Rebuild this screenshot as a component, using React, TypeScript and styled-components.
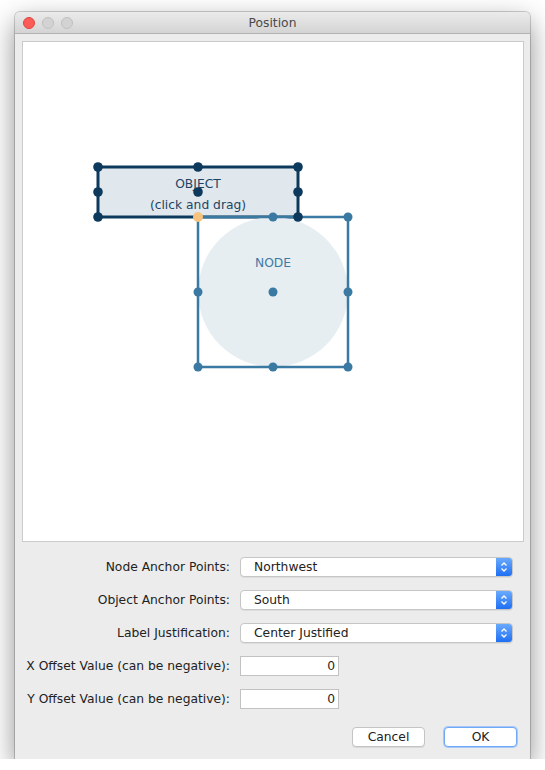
import styled, { createGlobalStyle } from "styled-components";

const GlobalStyle = createGlobalStyle`
  * { box-sizing: border-box; }
  body {
    margin: 0;
    background: #ffffff;
    font-family: "DejaVu Sans", "Liberation Sans", sans-serif;
    font-size: 12.3px;
    color: #222;
  }
`;

const Window = styled.div`
  width: 515px;
  margin: 12px 0 0 15px;
  background: #ececec;
  border-radius: 5px 5px 0 0;
  box-shadow: 0 0 0 1px rgba(0, 0, 0, 0.18), 0 10px 28px rgba(0, 0, 0, 0.45);
`;

const TitleBar = styled.div`
  position: relative;
  height: 22px;
  display: flex;
  align-items: center;
  justify-content: center;
  background: linear-gradient(#ebebeb, #d4d4d4);
  border-bottom: 1px solid #b2b2b2;
  border-radius: 5px 5px 0 0;
  color: #4a4a4a;
`;

const Lights = styled.div`
  position: absolute;
  left: 8px;
  top: 5px;
  display: flex;
  gap: 7px;
`;

const Light = styled.span<{ $red?: boolean }>`
  width: 12px;
  height: 12px;
  border-radius: 50%;
  background: ${(p) => (p.$red ? "#fc5c57" : "#d3d3d3")};
  border: 1px solid ${(p) => (p.$red ? "#e0443e" : "#c0c0c0")};
`;

const Content = styled.div`
  padding: 7px 6px 12px 7px;
`;

const Canvas = styled.div`
  height: 501px;
  background: #fff;
  border: 1px solid #cbcbcb;
  svg { display: block; }
`;

const Form = styled.div`
  margin-top: 15px;
  display: flex;
  flex-direction: column;
  gap: 13px;
`;

const Row = styled.div`
  display: grid;
  grid-template-columns: 208px auto;
  column-gap: 10px;
  align-items: center;
  height: 20px;
`;

const Label = styled.label`
  text-align: right;
  white-space: nowrap;
`;

const Select = styled.div`
  width: 273px;
  height: 20px;
  display: flex;
  align-items: center;
  background: #fff;
  border: 1px solid #c6c6c6;
  border-radius: 4px;
  box-shadow: 0 1px 0 rgba(0, 0, 0, 0.06);
  overflow: hidden;
`;

const SelectText = styled.span`
  flex: 1;
  padding-left: 13px;
`;

const Stepper = styled.span`
  width: 16px;
  height: 100%;
  display: flex;
  align-items: center;
  justify-content: center;
  background: linear-gradient(#6aaafd, #1f6ff4);
`;

const TextField = styled.div`
  width: 99px;
  height: 20px;
  background: #fff;
  border: 1px solid #c2c2c2;
  text-align: right;
  padding-right: 3px;
  line-height: 18px;
`;

const Buttons = styled.div`
  margin-top: 5px;
  display: flex;
  justify-content: flex-end;
  gap: 19px;
  padding-right: 7px;
`;

const Button = styled.button<{ $default?: boolean }>`
  width: 73px;
  height: 20px;
  padding: 0;
  font: inherit;
  color: #222;
  background: #fff;
  border-radius: 4px;
  border: 1px solid ${(p) => (p.$default ? "#6ea8f7" : "#c4c4c4")};
  box-shadow: ${(p) =>
    p.$default ? "0 0 0 1px #a6c8f8" : "0 1px 0 rgba(0, 0, 0, 0.08)"};
`;

const StepIcon = () => (
  <svg width="8" height="12" viewBox="0 0 8 12">
    <path d="M1.5 4.5 L4 2 L6.5 4.5 M1.5 7.5 L4 10 L6.5 7.5" fill="none" stroke="#fff" strokeWidth="1.3" />
  </svg>
);

const OBJ = "#0d3a5c";
const NODE = "#3a79a2";

const objHandles = [
  [75, 125], [175, 125], [275, 125],
  [75, 150], [175, 150], [275, 150],
  [75, 175], [275, 175],
];
const nodeHandles = [
  [250, 175], [325, 175],
  [175, 250], [250, 250], [325, 250],
  [175, 325], [250, 325], [325, 325],
];

const Diagram = () => (
  <svg width="500" height="499" viewBox="0 0 500 499" fontFamily="DejaVu Sans, sans-serif" fontSize="12.3">
    <rect x="75" y="125" width="200" height="50" fill="#e1e8ed" stroke={OBJ} strokeWidth="3" />
    <text x="175" y="146" textAnchor="middle" fill="#1d4466">OBJECT</text>
    <text x="175" y="167" textAnchor="middle" fill="#1d4466">(click and drag)</text>
    <circle cx="250" cy="250" r="75" fill="#e7eef2" />
    <rect x="175" y="175" width="150" height="150" fill="none" stroke={NODE} strokeWidth="2.5" />
    <text x="250" y="225" textAnchor="middle" fill="#3f7aa5">NODE</text>
    {nodeHandles.map(([x, y]) => (
      <circle key={`n${x}-${y}`} cx={x} cy={y} r="4.5" fill={NODE} />
    ))}
    {objHandles.map(([x, y]) => (
      <circle key={`o${x}-${y}`} cx={x} cy={y} r="4.8" fill={OBJ} />
    ))}
    <circle cx="175" cy="175" r="5" fill="#f7c27d" />
  </svg>
);

const selects = [
  { label: "Node Anchor Points:", value: "Northwest" },
  { label: "Object Anchor Points:", value: "South" },
  { label: "Label Justification:", value: "Center Justified" },
];

const offsets = ["X Offset Value (can be negative):", "Y Offset Value (can be negative):"];

export default function App() {
  return (
    <>
      <GlobalStyle />
      <Window>
        <TitleBar>
          <Lights>
            <Light $red />
            <Light />
            <Light />
          </Lights>
          Position
        </TitleBar>
        <Content>
          <Canvas>
            <Diagram />
          </Canvas>
          <Form>
            {selects.map((s) => (
              <Row key={s.label}>
                <Label>{s.label}</Label>
                <Select>
                  <SelectText>{s.value}</SelectText>
                  <Stepper>
                    <StepIcon />
                  </Stepper>
                </Select>
              </Row>
            ))}
            {offsets.map((l) => (
              <Row key={l}>
                <Label>{l}</Label>
                <TextField>0</TextField>
              </Row>
            ))}
            <Buttons>
              <Button>Cancel</Button>
              <Button $default>OK</Button>
            </Buttons>
          </Form>
        </Content>
      </Window>
    </>
  );
}
